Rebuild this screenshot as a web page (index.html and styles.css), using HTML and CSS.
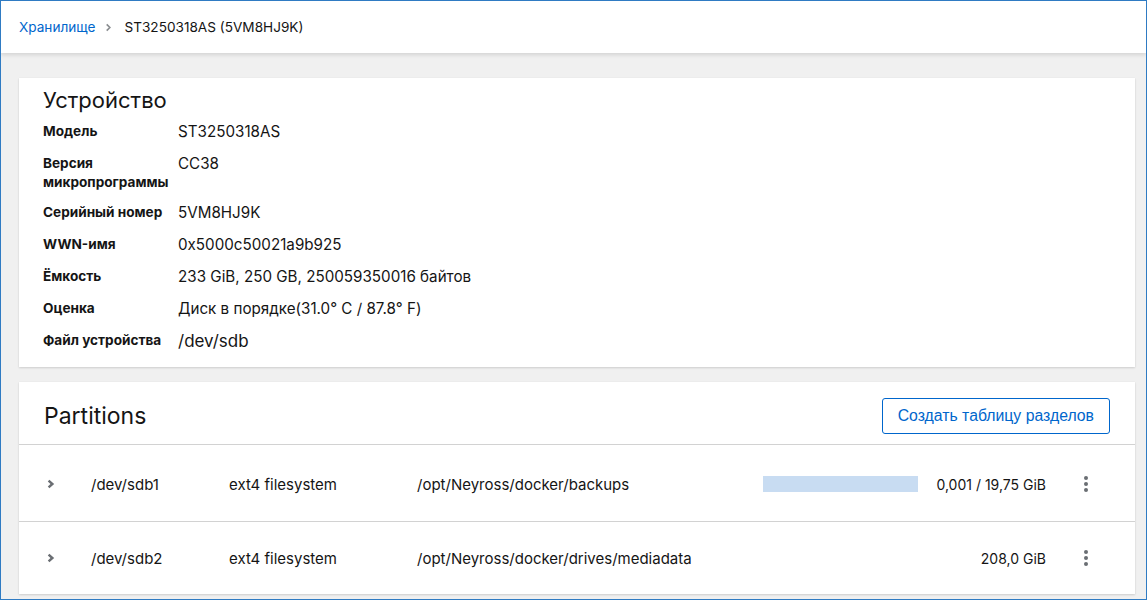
FILE: index.html
```html
<!DOCTYPE html>
<html lang="ru">
<head>
<meta charset="utf-8">
<title>Storage</title>
<link rel="stylesheet" href="styles.css">
</head>
<body>
<div class="frame">
  <header class="topbar">
    <nav class="crumbs">
      <a class="crumb-link" href="#">Хранилище</a>
      <svg class="crumb-sep" viewBox="0 0 10 10" width="9" height="9"><path d="M3 1.5 L6.5 5 L3 8.5" fill="none" stroke="#8a8d90" stroke-width="1.8"/></svg>
      <span class="crumb-current">ST3250318AS (5VM8HJ9K)</span>
    </nav>
  </header>
  <main class="content">
    <section class="card device">
      <h2 class="card-title">Устройство</h2>
      <dl class="props">
        <dt>Модель</dt><dd>ST3250318AS</dd>
        <dt>Версия микропрограммы</dt><dd>CC38</dd>
        <dt>Серийный номер</dt><dd>5VM8HJ9K</dd>
        <dt>WWN-имя</dt><dd>0x5000c50021a9b925</dd>
        <dt>Ёмкость</dt><dd>233 GiB, 250 GB, 250059350016 байтов</dd>
        <dt>Оценка</dt><dd>Диск в порядке(31.0° C / 87.8° F)</dd>
        <dt>Файл устройства</dt><dd class="big">/dev/sdb</dd>
      </dl>
    </section>
    <section class="card partitions">
      <div class="part-head">
        <h2 class="card-title">Partitions</h2>
        <button class="btn-secondary">Создать таблицу разделов</button>
      </div>
      <div class="part-row">
        <svg class="toggle" viewBox="0 0 10 10" width="10" height="10"><path d="M2.6 1.6 L6.4 5 L2.6 8.4" fill="none" stroke="#6a6e73" stroke-width="2.4"/></svg>
        <span class="c-dev">/dev/sdb1</span>
        <span class="c-fs">ext4 filesystem</span>
        <span class="c-mnt">/opt/Neyross/docker/backups</span>
        <span class="c-bar"><span class="bar-fill"></span></span>
        <span class="c-size">0,001 / 19,75 GiB</span>
        <span class="kebab"><i></i><i></i><i></i></span>
      </div>
      <div class="part-row">
        <svg class="toggle" viewBox="0 0 10 10" width="10" height="10"><path d="M2.6 1.6 L6.4 5 L2.6 8.4" fill="none" stroke="#6a6e73" stroke-width="2.4"/></svg>
        <span class="c-dev">/dev/sdb2</span>
        <span class="c-fs">ext4 filesystem</span>
        <span class="c-mnt">/opt/Neyross/docker/drives/mediadata</span>
        <span class="c-bar"></span>
        <span class="c-size">208,0 GiB</span>
        <span class="kebab"><i></i><i></i><i></i></span>
      </div>
    </section>
  </main>
</div>
</body>
</html>
```

FILE: styles.css
```css
html, body {
  margin: 0;
  padding: 0;
  height: 601px;
  overflow: hidden;
  font-family: "Inter", "Open Sans", sans-serif;
  color: #151515;
  background: #fff;
}
.frame {
  box-sizing: border-box;
  width: 1147px;
  height: 600px;
  border: 1px solid #2f7bc3;
  background: #f0f0f0;
  display: flex;
  flex-direction: column;
  overflow: hidden;
}
.topbar {
  height: 52px;
  flex: none;
  background: #fff;
  box-shadow: 0 2px 4px rgba(0,0,0,0.12);
  display: flex;
  align-items: center;
  padding-left: 18px;
  position: relative;
  z-index: 1;
}
.crumbs {
  display: flex;
  align-items: center;
  font-size: 13.6px;
}
.crumb-link {
  color: #0066cc;
  text-decoration: none;
}
.crumb-sep {
  margin: 0 11px 0 9px;
}
.crumb-current {
  color: #151515;
}
.content {
  padding: 25px 11px 0 18px;
  display: flex;
  flex-direction: column;
  gap: 15px;
}
.card {
  background: #fff;
  box-shadow: 0 1px 2px rgba(0,0,0,0.14), 0 0 1px rgba(0,0,0,0.06);
}
.device {
  padding: 10px 24px 15px 24px;
}
.card-title {
  margin: 0;
  font-weight: 400;
  font-size: 22px;
  line-height: 24px;
}
.partitions .card-title {
  font-size: 23px;
}
.props {
  display: grid;
  grid-template-columns: 135px 1fr;
  row-gap: 10px;
  margin: 9px 0 0 0;
  align-items: start;
}
.props dt {
  font-weight: 700;
  font-size: 13.6px;
  line-height: 19px;
  padding-top: 1px;
  margin: 0;
}
.props dd {
  margin: 0;
  font-size: 15.2px;
  line-height: 22px;
}
.props dd.big {
  font-size: 17px;
}
.part-head {
  display: flex;
  align-items: center;
  justify-content: space-between;
  height: 56px;
  padding: 6px 24px 0 25px;
  border-bottom: 1px solid #d2d2d2;
}
.btn-secondary {
  font-family: "Liberation Sans", "Roboto", sans-serif;
  font-size: 15.8px;
  color: #0066cc;
  background: #fff;
  border: 1px solid #0066cc;
  border-radius: 3px;
  height: 36px;
  padding: 0 15px;
  margin-right: 1px;
}
.part-row {
  display: flex;
  align-items: center;
  height: 77px;
  font-size: 15px;
  border-bottom: 1px solid #d2d2d2;
  padding: 2px 0 0 27px;
  box-sizing: border-box;
}
.part-row:last-child {
  border-bottom: 0;
  height: 72px;
  padding-top: 0;
}
.toggle {
  width: 10px;
  margin-right: 35px;
}
.c-dev { width: 138px; }
.c-fs { width: 188px; }
.c-mnt { width: 346px; }
.c-bar {
  width: 155px;
  height: 16px;
  display: flex;
}
.bar-fill {
  flex: 1;
  background: #c8dcf2;
}
.c-size {
  width: 128px;
  text-align: right;
  font-size: 14px;
}
.kebab {
  display: flex;
  flex-direction: column;
  gap: 2px;
  margin-left: 38px;
}
.kebab i {
  width: 4px;
  height: 4px;
  border-radius: 50%;
  background: #6a6e73;
}
```
